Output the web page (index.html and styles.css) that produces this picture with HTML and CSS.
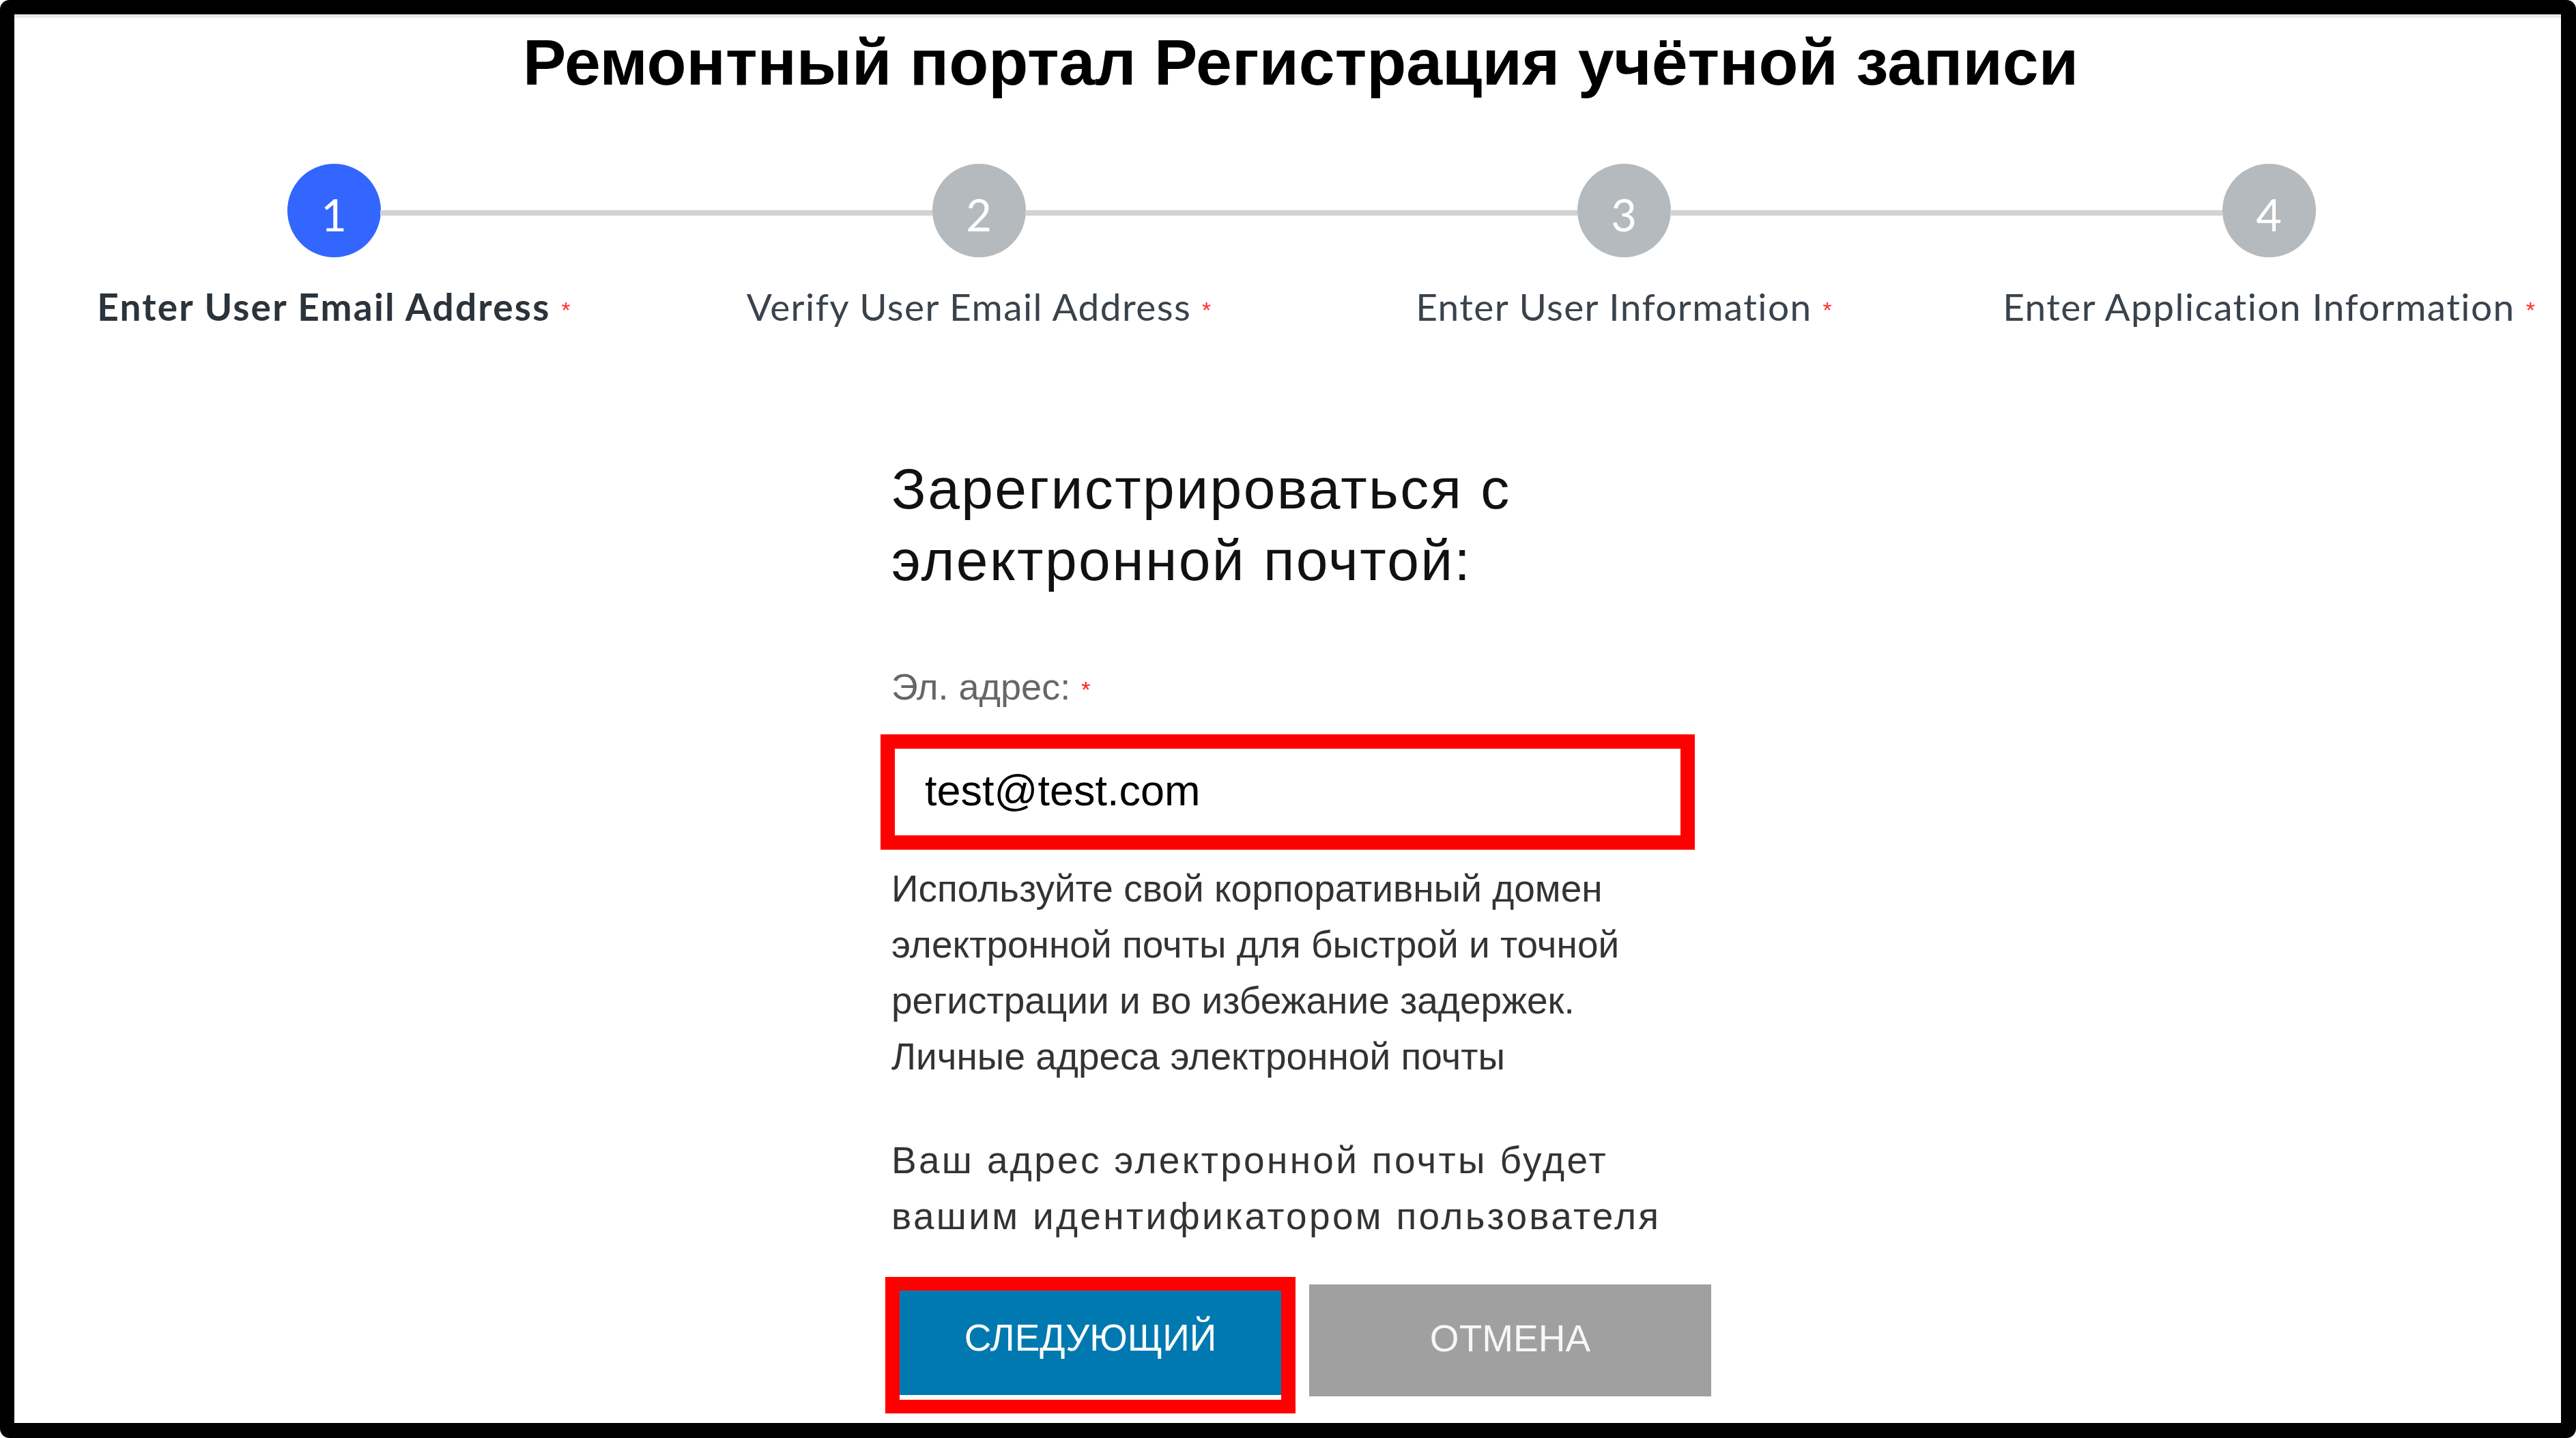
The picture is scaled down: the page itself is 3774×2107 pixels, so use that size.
FILE: index.html
```html
<!DOCTYPE html>
<html lang="ru">
<head>
<meta charset="utf-8">
<title>Ремонтный портал Регистрация учётной записи</title>
<link rel="stylesheet" href="styles.css">
</head>
<body>
<div class="frame">
  <div class="topline"></div>
  <h1 class="title">Ремонтный портал Регистрация учётной записи</h1>
  <ol class="steps">
    <li class="step active"><div class="dot">1</div><div class="step-label">Enter User Email Address<span class="req">*</span></div></li>
    <li class="step"><div class="dot">2</div><div class="step-label">Verify User Email Address<span class="req">*</span></div></li>
    <li class="step"><div class="dot">3</div><div class="step-label">Enter User Information<span class="req">*</span></div></li>
    <li class="step"><div class="dot">4</div><div class="step-label">Enter Application Information<span class="req">*</span></div></li>
  </ol>
  <main class="form">
    <h2 class="form-title">Зарегистрироваться с<br>электронной почтой:</h2>
    <label class="field-label">Эл. адрес:<span class="req">*</span></label>
    <div class="hl hl-input"><div class="input">test@test.com</div></div>
    <p class="hint">Используйте свой корпоративный домен<br>электронной почты для быстрой и точной<br>регистрации и во избежание задержек.<br>Личные адреса электронной почты</p>
    <p class="note">Ваш адрес электронной почты будет<br>вашим идентификатором пользователя</p>
    <div class="actions">
      <div class="hl hl-btn"><button class="btn btn-primary">СЛЕДУЮЩИЙ</button></div>
      <button class="btn btn-cancel">ОТМЕНА</button>
    </div>
  </main>
</div>
</body>
</html>
```
FILE: styles.css
```css
html, body {
  margin: 0;
  padding: 0;
  background: #fff;
}

.frame {
  width: 3774px;
  height: 2107px;
  box-sizing: border-box;
  border: 21px solid #000;
  border-right-width: 22px;
  border-bottom-width: 22px;
  border-radius: 14px;
  background: #fff;
  overflow: hidden;
}

.topline {
  height: 5px;
  background: #e8e8e8;
}

.title {
  margin: 11px 0 0;
  padding-left: 38px;
  text-align: center;
  font: 700 95px/109px "Liberation Sans", Arial, sans-serif;
  color: #000;
}

.steps {
  list-style: none;
  margin: 94px 0 0 -4.5px;
  padding: 0;
  display: grid;
  grid-template-columns: repeat(4, 945px);
}

.step {
  position: relative;
  display: flex;
  flex-direction: column;
  align-items: center;
}

.step:not(:last-child)::after {
  content: "";
  position: absolute;
  top: 68px;
  left: calc(50% + 68px);
  width: calc(100% - 136px);
  height: 8px;
  background: #d3d3d3;
}

.dot {
  width: 137px;
  height: 137px;
  box-sizing: border-box;
  padding-top: 11px;
  border-radius: 50%;
  background: #b5babe;
  color: #fff;
  font: 400 65px/1 Lato, sans-serif;
  display: flex;
  align-items: center;
  justify-content: center;
}

.step.active .dot {
  background: #3366ff;
}

.step-label {
  margin-top: 40px;
  font: 400 55px/64px Lato, sans-serif;
  letter-spacing: 1.4px;
  color: #3a434c;
  white-space: nowrap;
}

.step.active .step-label {
  font-weight: 700;
  letter-spacing: 2.2px;
  color: #2b333b;
}

.req {
  font-family: "Liberation Sans", Arial, sans-serif;
  font-weight: 400;
  letter-spacing: 0;
}

.step-label .req {
  color: #f33;
  font-size: 34px;
  vertical-align: 4px;
  margin-left: 16px;
}

.form {
  margin: 178px 0 0 1269px;
  width: 1240px;
  font-family: "Liberation Sans", Arial, sans-serif;
}

.form-title {
  margin: 0 0 0 16px;
  font-weight: 400;
  font-size: 84px;
  line-height: 105px;
  letter-spacing: 2.4px;
  color: #111;
}

.field-label {
  display: block;
  margin: 100px 0 0 16px;
  font-size: 54px;
  line-height: 65px;
  color: #666;
}

.field-label .req {
  color: #f22;
  font-size: 34px;
  vertical-align: 3px;
  margin-left: 16px;
}

.hl {
  border: 21px solid #f00;
  background: #fff;
  box-sizing: border-box;
}

.hl-input {
  margin-top: 33px;
  width: 1193px;
  height: 169px;
}

.input {
  padding: 26px 0 0 44px;
  font-size: 63px;
  line-height: 71px;
  color: #000;
}

.hint {
  margin: 16px 0 0 16px;
  font-size: 55px;
  line-height: 82px;
  color: #333;
}

.note {
  margin: 70px 0 0 16px;
  font-size: 55px;
  line-height: 82px;
  letter-spacing: 3.3px;
  color: #333;
}

.actions {
  display: flex;
  align-items: flex-start;
  margin: 48px 0 0 7px;
}

.hl-btn {
  border-width: 20px 21px;
  padding-bottom: 7px;
}

.btn {
  border: 0;
  margin: 0;
  font-family: "Liberation Sans", Arial, sans-serif;
  font-size: 55px;
  color: #fff;
  cursor: pointer;
}

.btn-primary {
  display: block;
  width: 559px;
  height: 153px;
  padding: 0 0 15px;
  background: #0079b0;
}

.btn-cancel {
  margin: 11px 0 0 20px;
  width: 589px;
  height: 164px;
  padding: 0 0 6px;
  background: #a0a0a0;
  color: #f7f7f7;
}
```
